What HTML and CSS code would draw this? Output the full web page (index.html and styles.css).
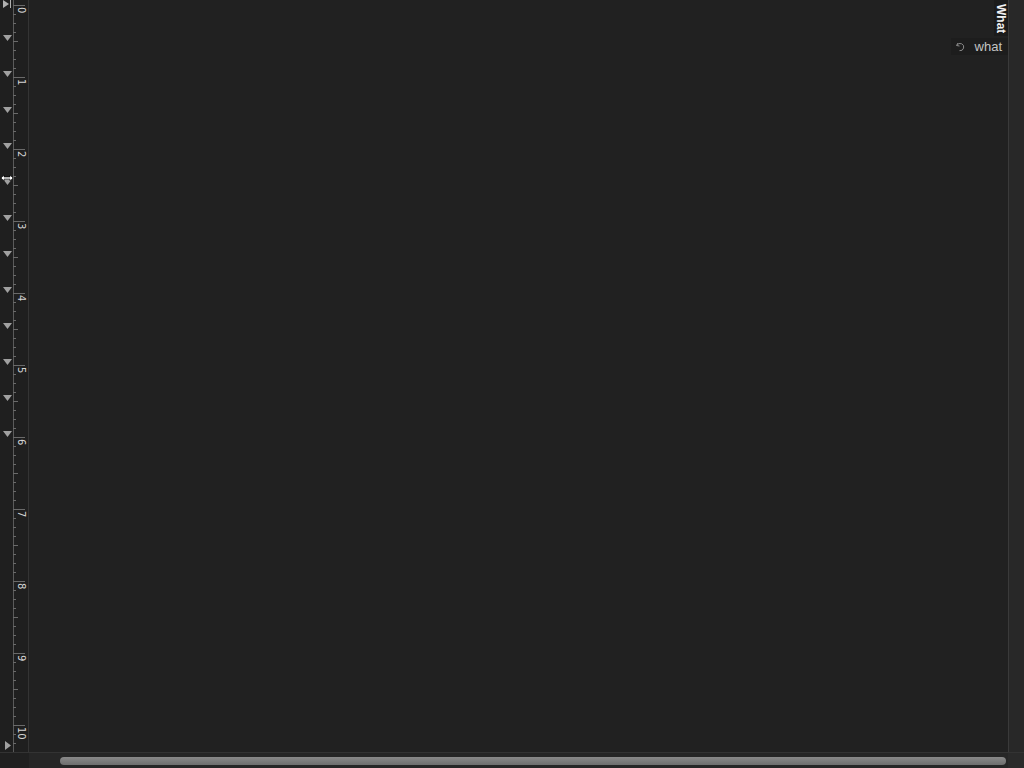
FILE: index.html
```html
<!DOCTYPE html>
<html>
<head>
<meta charset="utf-8">
<link rel="stylesheet" href="styles.css">
</head>
<body>
<div class="app">
  <div class="main">
    <div class="ruler">
      <svg width="28" height="752" viewBox="0 0 28 752" id="ruler-svg"></svg>
    </div>
    <div class="canvas">
      <div class="tab">What</div>
      <div class="label"><svg width="11" height="11" viewBox="0 0 11 11"><path d="M3 2 L1.5 4.5 L4.5 5" fill="none" stroke="#8a8a8a" stroke-width="1"/><path d="M2 4.3 A3.6 3.6 0 1 1 4.5 9.6" fill="none" stroke="#8a8a8a" stroke-width="1"/></svg><span>what</span></div>
    </div>
    <div class="side"></div>
  </div>
  <div class="bottom">
    <div class="corner"></div>
    <div class="track"><div class="thumb"></div></div>
    <div class="corner2"></div>
  </div>
</div>
<script src="script.js"></script>
</body>
</html>
```
FILE: script.js
```js
(function(){
  var svg = document.getElementById('ruler-svg');
  var out = '';
  out += '<line x1="13.5" y1="0" x2="13.5" y2="752" stroke="#5a5a5a" stroke-width="1"/>';
  for (var y = 5; y < 752; y += 9) {
    var k = (y - 5) / 9;
    var len = 3;
    if (k % 8 === 0) len = 12;
    else if (k % 4 === 0) len = 5;
    out += '<line x1="13" y1="' + (y + 0.5) + '" x2="' + (13 + len) + '" y2="' + (y + 0.5) + '" stroke="#6a6a6a" stroke-width="1"/>';
  }
  for (var n = 0; n <= 10; n++) {
    var ty = 5 + 72 * n + 2;
    out += '<text x="' + ty + '" y="-18" transform="rotate(90)" class="num">' + n + '</text>';
  }
  for (var t = 0; t < 12; t++) {
    var tip = 41 + 36 * t;
    out += '<polygon points="3,' + (tip - 6) + ' 12,' + (tip - 6) + ' 7.5,' + tip + '" fill="#a0a0a0"/>';
  }
  out += '<polygon points="3,0 3,8 9,4" fill="#b0b0b0"/><line x1="10.5" y1="0" x2="10.5" y2="8" stroke="#b0b0b0"/>';
  out += '<polygon points="5,741 5,750 11,745.5" fill="#a0a0a0"/>';
  out += '<path d="M1 178 L4 175 L4 177 L10 177 L10 175 L13 178 L10 181 L10 179 L4 179 L4 181 Z" fill="#fff" stroke="#000" stroke-width="0.6"/>';
  svg.innerHTML = out;
})();
```
FILE: styles.css
```css
html, body {
  margin: 0;
  padding: 0;
  width: 1024px;
  height: 768px;
  overflow: hidden;
  background: #202020;
  font-family: "DejaVu Sans", "Liberation Sans", sans-serif;
}
.app {
  display: flex;
  flex-direction: column;
  width: 1024px;
  height: 768px;
}
.main {
  display: flex;
  height: 752px;
}
.ruler {
  width: 28px;
  flex: none;
  background: #1f1f1f;
  border-right: 1px solid #343434;
}
.ruler svg { display: block; }
.num {
  font-family: "DejaVu Sans", sans-serif;
  font-size: 10px;
  fill: #d4d4d4;
}
.canvas {
  flex: 1;
  position: relative;
  background: #212121;
  border-right: 1px solid #3a3a3a;
}
.side {
  width: 15px;
  flex: none;
  background: #282828;
}
.tab {
  position: absolute;
  right: 0;
  top: 0;
  width: 14px;
  height: 36px;
  background: #1b1b1b;
  color: #f2f2f2;
  font-family: "Liberation Sans", sans-serif;
  font-weight: bold;
  font-size: 12px;
  writing-mode: vertical-rl;
  display: flex;
  align-items: center;
  padding-top: 4px;
  box-sizing: border-box;
}
.label {
  position: absolute;
  right: 0;
  top: 38px;
  height: 17px;
  padding: 0 6px 0 4px;
  background: #1d1d1d;
  display: flex;
  align-items: center;
  gap: 9px;
  color: #c4c4c4;
  font-family: "Liberation Sans", sans-serif;
  font-size: 13px;
}
.label svg { display: block; }
.bottom {
  display: flex;
  height: 16px;
  background: #262626;
  border-top: 1px solid #333;
  box-sizing: border-box;
}
.corner {
  width: 29px;
  flex: none;
  background: #202020;
}
.track {
  flex: 1;
  display: flex;
  align-items: center;
  padding-left: 31px;
  padding-right: 2px;
}
.thumb {
  flex: 1;
  height: 8px;
  border-radius: 4px;
  background: linear-gradient(#8a8a8a, #6e6e6e);
}
.corner2 {
  width: 16px;
  flex: none;
  background: #2a2a2a;
}
```
